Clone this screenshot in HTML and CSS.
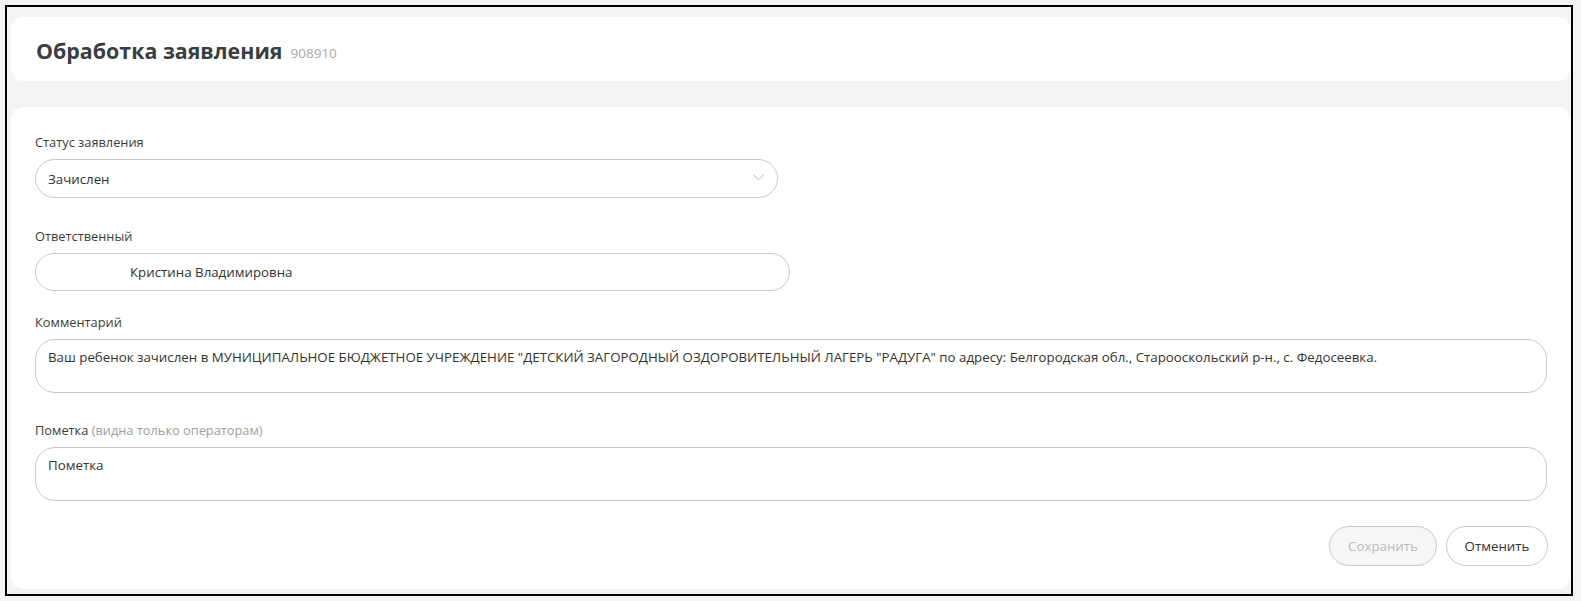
FILE: index.html
```html
<!DOCTYPE html>
<html lang="ru">
<head>
<meta charset="utf-8">
<title>Обработка заявления</title>
<link rel="stylesheet" href="styles.css">
</head>
<body>
<div class="frame">
  <header class="card head">
    <h1 class="title">Обработка заявления</h1>
    <span class="num">908910</span>
  </header>
  <section class="card form">
    <div class="field f-status">
      <label class="label">Статус заявления</label>
      <div class="control select">
        <span>Зачислен</span>
        <svg class="chev" width="11" height="7" viewBox="0 0 11 7"><path d="M0.5 0.8 L5.5 5.8 L10.5 0.8" fill="none" stroke="#b5b5b5" stroke-width="1"/></svg>
      </div>
    </div>
    <div class="field f-resp">
      <label class="label">Ответственный</label>
      <div class="control input resp"><span class="name">Кристина Владимировна</span></div>
    </div>
    <div class="field f-comment">
      <label class="label">Комментарий</label>
      <div class="control area">Ваш ребенок зачислен в МУНИЦИПАЛЬНОЕ БЮДЖЕТНОЕ УЧРЕЖДЕНИЕ "ДЕТСКИЙ ЗАГОРОДНЫЙ ОЗДОРОВИТЕЛЬНЫЙ ЛАГЕРЬ "РАДУГА" по адресу: Белгородская обл., Старооскольский р-н., с. Федосеевка.</div>
    </div>
    <div class="field f-note">
      <label class="label">Пометка <span class="hint">(видна только операторам)</span></label>
      <div class="control area">Пометка</div>
    </div>
    <div class="actions">
      <button class="btn btn-disabled" disabled>Сохранить</button>
      <button class="btn">Отменить</button>
    </div>
  </section>
</div>
</body>
</html>
```

FILE: styles.css
```css
* { box-sizing: border-box; }
html, body {
  margin: 0;
  padding: 0;
  background: #f4f4f4;
  font-family: "Open Sans", "Noto Sans", "Liberation Sans", sans-serif;
  color: #333;
}
.frame {
  margin: 5px 0 0 5px;
  width: 1568px;
  height: 591px;
  border: 2px solid #000;
  background: #f4f4f4;
  padding: 10px 0 0 4px;
  display: flex;
  flex-direction: column;
  gap: 26px;
}
.card {
  background: #fff;
  border-radius: 12px;
  width: 1559px;
}
.head {
  height: 64px;
  display: flex;
  align-items: center;
  padding: 3px 0 0 25px;
}
.title {
  margin: 0;
  font-size: 21.4px;
  font-weight: 700;
  color: #3a3e43;
}
.num {
  margin-left: 8px;
  margin-top: 5px;
  font-size: 13.5px;
  color: #a8a8a8;
}
.form {
  height: 482px;
  padding: 26px 22px 0 24px;
  display: flex;
  flex-direction: column;
}
.field { display: flex; flex-direction: column; }
.label {
  font-size: 12.8px;
  line-height: 18px;
  color: #3c3c3c;
  margin-bottom: 8px;
}
.hint { color: #a0a0a0; }
.control {
  border: 1px solid #c9c9c9;
  border-radius: 20px;
  font-size: 13.3px;
  color: #333;
  background: #fff;
}
.select {
  width: 743px;
  height: 39px;
  display: flex;
  align-items: center;
  justify-content: space-between;
  padding: 0 13px 0 12px;
}
.chev { margin-top: -2px; }
.f-resp { margin-top: 29px; }
.input {
  width: 755px;
  height: 38px;
  display: flex;
  align-items: center;
  padding-left: 94px;
}
.f-comment { margin-top: 22px; }
.area {
  width: 1512px;
  height: 54px;
  padding: 7px 12px;
  line-height: 20px;
}
.f-note { margin-top: 28px; }
.actions {
  margin-top: 25px;
  display: flex;
  justify-content: flex-end;
  gap: 9px;
}
.btn {
  height: 40px;
  border: 1px solid #c9c9c9;
  border-radius: 20px;
  background: #fff;
  color: #333;
  font-family: inherit;
  font-size: 13.3px;
  padding: 0 16px;
  min-width: 102px;
}
.btn-disabled {
  background: #f6f6f6;
  color: #bdbdbd;
  width: 108px;
}
```
